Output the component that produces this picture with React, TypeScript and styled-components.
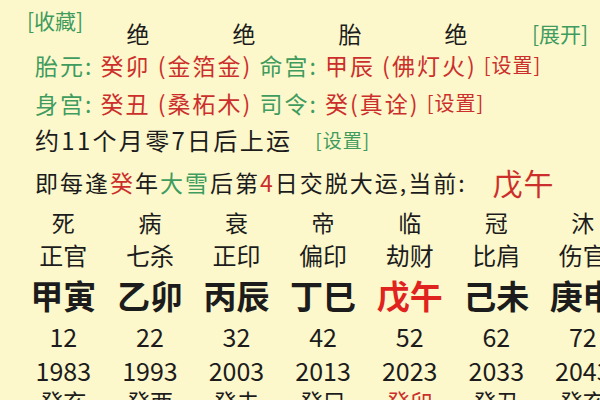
import React from 'react';
import styled, { createGlobalStyle } from 'styled-components';

const Global = createGlobalStyle`
  html, body { margin: 0; padding: 0; background: #fcf8cc; }
  body { font-family: "Noto Sans CJK SC", "Noto Sans", sans-serif; color: #1c1c1c; }
`;

const GREEN = '#3f9b5e';
const RED = '#cc2f2b';
const BRIGHT_RED = '#e0231f';

const Page = styled.div`
  width: 600px;
  height: 400px;
  overflow: hidden;
  background: #fcf8cc;
`;

const Header = styled.div`
  display: flex;
  align-items: flex-start;
  height: 46px;
  padding-left: 27px;
`;

const Collect = styled.div`
  width: 58px;
  margin-top: 8px;
  line-height: 24px;
  font-size: 21px;
  color: ${GREEN};
  white-space: nowrap;
`;

const HeadCell = styled.div`
  width: 106px;
  text-align: center;
  margin-top: 21px;
  line-height: 24px;
  font-size: 23px;
`;

const Expand = styled.div`
  margin-left: 23px;
  margin-top: 21px;
  line-height: 24px;
  font-size: 21px;
  color: ${GREEN};
  white-space: nowrap;
`;

const Info = styled.div`
  padding-left: 35px;
`;

const Line = styled.div<{ $h: number; $size?: number; $ls?: number }>`
  height: ${(p) => p.$h}px;
  line-height: ${(p) => p.$h}px;
  font-size: ${(p) => p.$size ?? 23}px;
  letter-spacing: ${(p) => p.$ls ?? 2}px;
  white-space: pre;
`;

const T = styled.span<{ $color?: string; $size?: number; $ls?: number; $ml?: number }>`
  color: ${(p) => p.$color ?? 'inherit'};
  font-size: ${(p) => (p.$size ? `${p.$size}px` : 'inherit')};
  letter-spacing: ${(p) => (p.$ls !== undefined ? `${p.$ls}px` : 'inherit')};
  margin-left: ${(p) => p.$ml ?? 0}px;
  vertical-align: top;
`;

const Grid = styled.div`
  display: grid;
  grid-template-columns: repeat(7, 86.6px);
  margin-left: 20px;
`;

const Cell = styled.div<{ $h: number; $size: number; $bold?: boolean; $color?: string }>`
  height: ${(p) => p.$h}px;
  display: flex;
  align-items: center;
  justify-content: center;
  line-height: 1;
  font-size: ${(p) => p.$size}px;
  font-weight: ${(p) => (p.$bold ? 700 : 400)};
  color: ${(p) => p.$color ?? '#1c1c1c'};
  white-space: nowrap;
`;

const stages = ['死', '病', '衰', '帝', '临', '冠', '沐'];
const gods = ['正官', '七杀', '正印', '偏印', '劫财', '比肩', '伤官'];
const pillars = ['甲寅', '乙卯', '丙辰', '丁巳', '戊午', '己未', '庚申'];
const ages = ['12', '22', '32', '42', '52', '62', '72'];
const years = ['1983', '1993', '2003', '2013', '2023', '2033', '2043'];
const liu = ['癸亥', '癸酉', '癸未', '癸巳', '癸卯', '癸丑', '癸亥'];
const CURRENT = 4;

export default function App() {
  return (
    <Page>
      <Global />
      <Header>
        <Collect>[收藏]</Collect>
        {['绝', '绝', '胎', '绝'].map((s, i) => (
          <HeadCell key={i}>{s}</HeadCell>
        ))}
        <Expand>[展开]</Expand>
      </Header>
      <Info>
        <Line $h={38}>
          <T $color={GREEN}>胎元: </T>
          <T $color={RED}>癸卯 (金箔金) </T>
          <T $color={GREEN}>命宫: </T>
          <T $color={RED}>甲辰 (佛灯火) </T>
          <T $color={RED} $size={20} $ls={1}>[设置]</T>
        </Line>
        <Line $h={38}>
          <T $color={GREEN}>身宫: </T>
          <T $color={RED}>癸丑 (桑柘木) </T>
          <T $color={GREEN}>司令: </T>
          <T $color={RED}>癸(真诠) </T>
          <T $color={RED} $size={20} $ls={1}>[设置]</T>
        </Line>
        <Line $h={36} $size={24} $ls={2.3}>
          <T>约11个月零7日后上运   </T>
          <T $color={GREEN} $size={19} $ls={1}>[设置]</T>
        </Line>
        <Line $h={48}>
          <T>即每逢</T>
          <T $color={RED}>癸</T>
          <T>年</T>
          <T $color={GREEN}>大雪</T>
          <T>后第</T>
          <T $color={RED}>4</T>
          <T>日交脱大运,当前:</T>
          <T $color={RED} $size={30} $ls={1} $ml={26}>戊午</T>
        </Line>
      </Info>
      <Grid>
        {stages.map((s) => (
          <Cell key={'s' + s} $h={32} $size={23}>{s}</Cell>
        ))}
        {gods.map((s) => (
          <Cell key={'g' + s} $h={34} $size={24}>{s}</Cell>
        ))}
        {pillars.map((s, i) => (
          <Cell key={'p' + s} $h={46} $size={33} $bold $color={i === CURRENT ? BRIGHT_RED : undefined}>{s}</Cell>
        ))}
        {ages.map((s) => (
          <Cell key={'a' + s} $h={36} $size={25}>{s}</Cell>
        ))}
        {years.map((s) => (
          <Cell key={'y' + s} $h={32} $size={25}>{s}</Cell>
        ))}
        {liu.map((s, i) => (
          <Cell key={'l' + i} $h={30} $size={23} $color={i === CURRENT ? RED : undefined}>{s}</Cell>
        ))}
      </Grid>
    </Page>
  );
}
